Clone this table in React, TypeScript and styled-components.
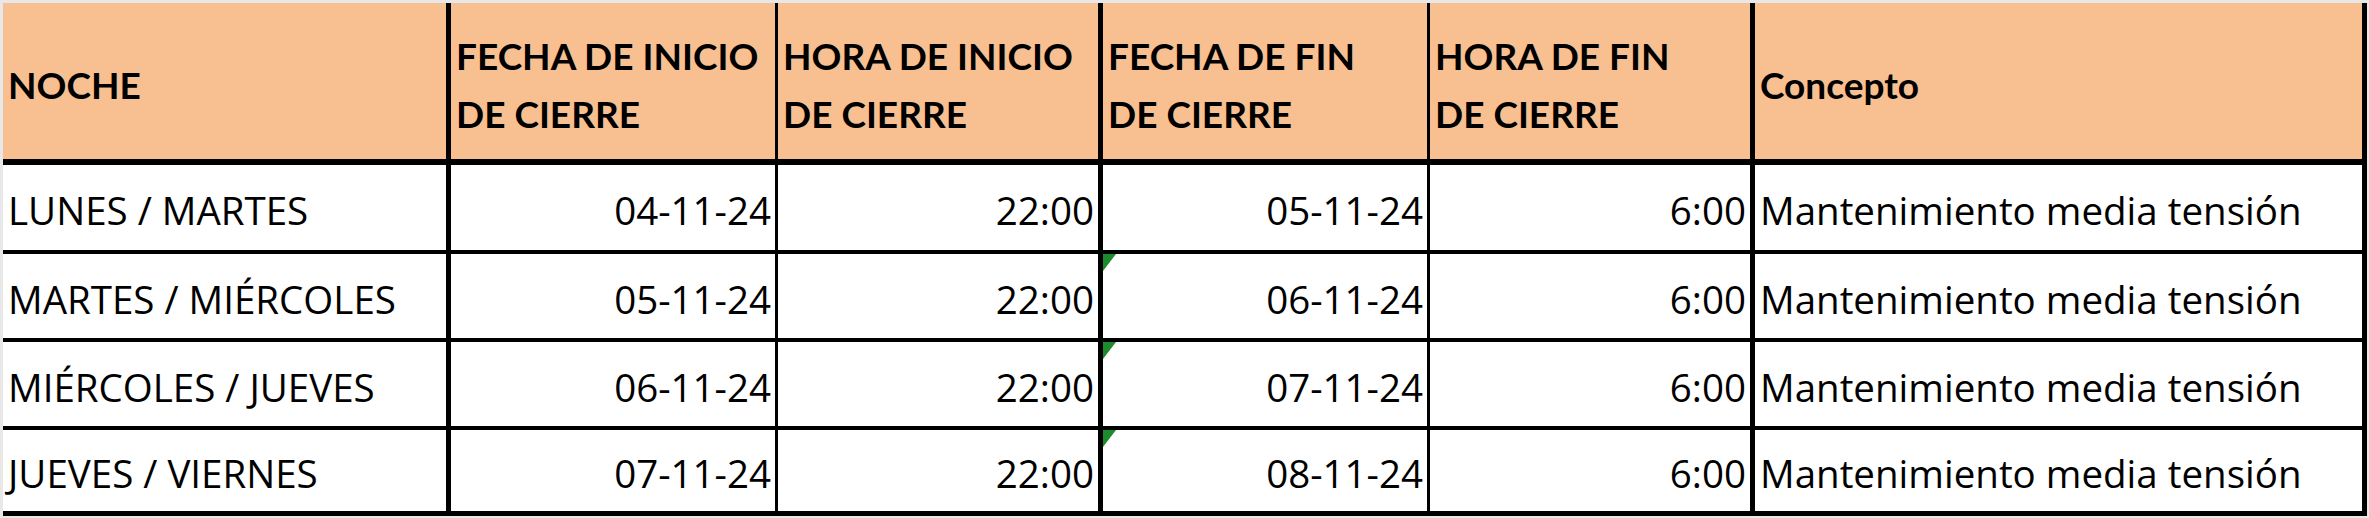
import React from 'react';
import styled, { createGlobalStyle } from 'styled-components';

const GlobalStyle = createGlobalStyle`
  html, body {
    margin: 0;
    padding: 0;
    background: #e8e8e8;
  }
  body {
    font-family: 'Open Sans', 'Liberation Sans', sans-serif;
    color: #000;
  }
`;

const thick = 5;
const thin = 3;

type Align = 'left' | 'right';

interface Column {
  key: string;
  title: string[];
  width: number;
  align: Align;
  thick: boolean;
}

const columns: Column[] = [
  { key: 'night', title: ['NOCHE'], width: 448, align: 'left', thick: true },
  { key: 'startDate', title: ['FECHA DE INICIO', 'DE CIERRE'], width: 327, align: 'right', thick: false },
  { key: 'startHour', title: ['HORA DE INICIO', 'DE CIERRE'], width: 325, align: 'right', thick: true },
  { key: 'endDate', title: ['FECHA DE FIN', 'DE CIERRE'], width: 327, align: 'right', thick: false },
  { key: 'endHour', title: ['HORA DE FIN', 'DE CIERRE'], width: 325, align: 'right', thick: true },
  { key: 'concept', title: ['Concepto'], width: 612, align: 'left', thick: true },
];

const rows = [
  { night: 'LUNES / MARTES', startDate: '04-11-24', startHour: '22:00', endDate: '05-11-24', endHour: '6:00', concept: 'Mantenimiento media tensión', flag: false, height: 89 },
  { night: 'MARTES / MIÉRCOLES', startDate: '05-11-24', startHour: '22:00', endDate: '06-11-24', endHour: '6:00', concept: 'Mantenimiento media tensión', flag: true, height: 88 },
  { night: 'MIÉRCOLES / JUEVES', startDate: '06-11-24', startHour: '22:00', endDate: '07-11-24', endHour: '6:00', concept: 'Mantenimiento media tensión', flag: true, height: 88 },
  { night: 'JUEVES / VIERNES', startDate: '07-11-24', startHour: '22:00', endDate: '08-11-24', endHour: '6:00', concept: 'Mantenimiento media tensión', flag: true, height: 86 },
];

const Sheet = styled.div`
  padding: 3px 0 0 3px;
`;

const Grid = styled.div<{ $cols: string; $rows: string }>`
  display: grid;
  grid-template-columns: ${({ $cols }) => $cols};
  grid-template-rows: ${({ $rows }) => $rows};
  width: max-content;
`;

const Cell = styled.div<{ $align: Align; $thickRight: boolean; $thickBottom: boolean }>`
  position: relative;
  box-sizing: border-box;
  display: flex;
  align-items: center;
  justify-content: ${({ $align }) => ($align === 'right' ? 'flex-end' : 'flex-start')};
  padding: 6px ${({ $align }) => ($align === 'right' ? '4px' : '0')} 0
    ${({ $align }) => ($align === 'left' ? '5px' : '0')};
  border-right: ${({ $thickRight }) => ($thickRight ? thick : thin)}px solid #000;
  border-bottom: ${({ $thickBottom }) => ($thickBottom ? thick : thin + 1)}px solid #000;
  background: #fff;
  font-size: 38.5px;
  line-height: 1.2;
  white-space: nowrap;
`;

const HeaderCell = styled(Cell)`
  background: #f8bf90;
  font-family: Lato, 'Liberation Sans', sans-serif;
  font-size: 37px;
  font-weight: 700;
  padding-top: 8px;
  border-bottom-width: ${thick + 1}px;
  justify-content: flex-start;
  padding-left: 5px;
`;

const HeaderLines = styled.div`
  display: flex;
  flex-direction: column;
  line-height: 58px;
`;

const ErrorFlag = styled.span`
  position: absolute;
  top: 0;
  left: 0;
  width: 0;
  height: 0;
  border-top: 17px solid #1e8a2c;
  border-right: 13px solid transparent;
`;

const App = () => {
  const cols = columns.map((c) => `${c.width}px`).join(' ');
  const rowSizes = ['162px', ...rows.map((r) => `${r.height}px`)].join(' ');

  return (
    <>
      <GlobalStyle />
      <Sheet>
        <Grid $cols={cols} $rows={rowSizes}>
          {columns.map((c) => (
            <HeaderCell key={c.key} $align="left" $thickRight={c.thick} $thickBottom>
              <HeaderLines>
                {c.title.map((line) => (
                  <span key={line}>{line}</span>
                ))}
              </HeaderLines>
            </HeaderCell>
          ))}
          {rows.map((r, i) =>
            columns.map((c) => (
              <Cell
                key={`${i}-${c.key}`}
                $align={c.align}
                $thickRight={c.thick}
                $thickBottom={i === rows.length - 1}
              >
                {c.key === 'endDate' && r.flag && <ErrorFlag />}
                {(r as Record<string, string | boolean | number>)[c.key] as string}
              </Cell>
            ))
          )}
        </Grid>
      </Sheet>
    </>
  );
};

export default App;
